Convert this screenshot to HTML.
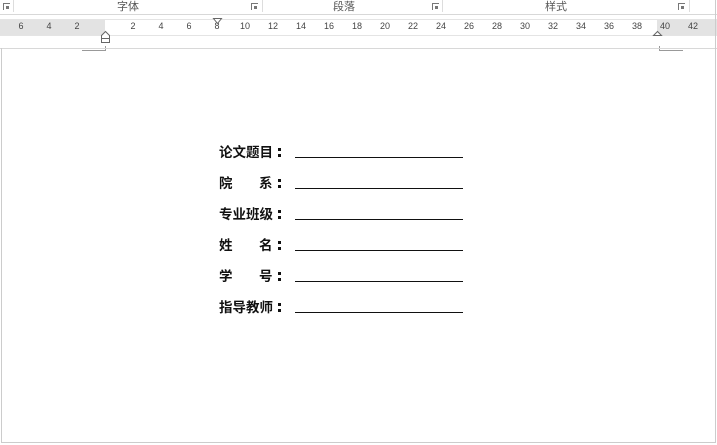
<!DOCTYPE html>
<html><head><meta charset="utf-8"><style>
body{margin:0;width:717px;height:445px;background:#fff;position:relative;overflow:hidden;font-family:"Liberation Sans","Noto Sans CJK SC",sans-serif}
.a{position:absolute}
.num{position:absolute;top:21px;font-size:9px;color:#444;width:20px;text-align:center}
.grp{position:absolute;top:-2px;font-size:11px;color:#555}
.dl{position:absolute;top:3px;width:6px;height:6px;border-left:1px solid #777;border-top:1px solid #777}
.dl:after{content:"";position:absolute;left:2px;top:2px;width:3px;height:3px;background:#777}
.sep{position:absolute;top:0;width:1px;height:12px;background:#ddd}
.lab{position:absolute;left:219px;font-size:13.5px;font-weight:bold;color:#111;white-space:pre;font-family:"Noto Sans CJK SC",sans-serif;line-height:16px;width:80px;height:16px}
.lab span{position:absolute;top:0}
.lab .c{left:54px;width:13px;text-align:center}
.c:before{content:"";position:absolute;left:5px;top:5px;width:3px;height:3px;background:#111;box-shadow:0 6px 0 #111}
.ln{position:absolute;left:295px;width:168px;height:1px;background:#111}
</style></head><body>
<div class="a" style="left:0;top:0;width:717px;height:14px;background:#fff;border-bottom:1px solid #d8d8d8"></div>
<div class="sep" style="left:13px"></div><div class="sep" style="left:262px"></div><div class="sep" style="left:442px"></div><div class="sep" style="left:689px"></div>
<div class="dl" style="left:3px"></div><div class="dl" style="left:251px"></div><div class="dl" style="left:432px"></div><div class="dl" style="left:678px"></div>
<div class="grp" style="left:117px">字体</div>
<div class="grp" style="left:333px">段落</div>
<div class="grp" style="left:545px">样式</div>
<div class="a" style="left:0;top:19px;width:717px;height:15px;background:#fff;border-top:1px solid #e4e4e4;border-bottom:1px solid #e4e4e4"></div>
<div class="a" style="left:0;top:20px;width:105px;height:15px;background:#e3e3e3"></div>
<div class="a" style="left:657px;top:20px;width:60px;height:15px;background:#e3e3e3"></div>
<div class="num" style="left:11px">6</div><div class="num" style="left:39px">4</div><div class="num" style="left:67px">2</div>
<div class="num" style="left:123px">2</div><div class="num" style="left:151px">4</div><div class="num" style="left:179px">6</div><div class="num" style="left:207px">8</div>
<div class="num" style="left:235px">10</div><div class="num" style="left:263px">12</div><div class="num" style="left:291px">14</div><div class="num" style="left:319px">16</div><div class="num" style="left:347px">18</div><div class="num" style="left:375px">20</div><div class="num" style="left:403px">22</div><div class="num" style="left:431px">24</div><div class="num" style="left:459px">26</div><div class="num" style="left:487px">28</div><div class="num" style="left:515px">30</div><div class="num" style="left:543px">32</div><div class="num" style="left:571px">34</div><div class="num" style="left:599px">36</div><div class="num" style="left:627px">38</div><div class="num" style="left:655px">40</div><div class="num" style="left:683px">42</div>
<svg class="a" style="left:0;top:0" width="717" height="55">
<path d="M213.5 18.5h8l-4 5z" fill="#fff" stroke="#666"/>
<path d="M101.5 35.5l4-4 4 4v3h-8z M101.5 38.5h8v4h-8z" fill="#fff" stroke="#666"/>
<path d="M653.5 35.5l4-4 4 4z" fill="#fff" stroke="#666"/>
<path d="M82 50.5h23.5V46" fill="none" stroke="#999"/>
<path d="M683 50.5h-23.5V46" fill="none" stroke="#999"/>
</svg>
<div class="a" style="left:0;top:48px;width:717px;height:1px;background:#d8d8d8"></div>
<div class="a" style="left:1px;top:48px;width:1px;height:395px;background:#ccc"></div>
<div class="a" style="left:715px;top:0;width:1px;height:443px;background:#ccc"></div>
<div class="a" style="left:1px;top:442px;width:715px;height:1px;background:#ccc"></div>
<div class="lab" style="top:143px"><span style="left:0">论文题目</span><span class="c"></span></div><div class="ln" style="top:157px"></div>
<div class="lab" style="top:174px"><span style="left:0">院</span><span style="left:40px">系</span><span class="c"></span></div><div class="ln" style="top:188px"></div>
<div class="lab" style="top:205px"><span style="left:0">专业班级</span><span class="c"></span></div><div class="ln" style="top:219px"></div>
<div class="lab" style="top:236px"><span style="left:0">姓</span><span style="left:40px">名</span><span class="c"></span></div><div class="ln" style="top:250px"></div>
<div class="lab" style="top:267px"><span style="left:0">学</span><span style="left:40px">号</span><span class="c"></span></div><div class="ln" style="top:281px"></div>
<div class="lab" style="top:298px"><span style="left:0">指导教师</span><span class="c"></span></div><div class="ln" style="top:312px"></div>
</body></html>
